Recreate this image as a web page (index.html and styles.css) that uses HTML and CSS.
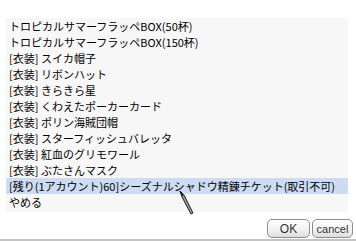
FILE: index.html
```html
<!DOCTYPE html>
<html lang="ja">
<head>
  <meta charset="UTF-8">
  <title>メニュー</title>
  <link rel="stylesheet" href="styles.css">
</head>
<body>

  <div class="window">
    <ul class="menu">
      <li>トロピカルサマーフラッペBOX(50杯)</li>
      <li>トロピカルサマーフラッペBOX(150杯)</li>
      <li>[衣装] スイカ帽子</li>
      <li>[衣装] リボンハット</li>
      <li>[衣装] きらきら星</li>
      <li>[衣装] くわえたポーカーカード</li>
      <li>[衣装] ポリン海賊団帽</li>
      <li>[衣装] スターフィッシュバレッタ</li>
      <li>[衣装] 紅血のグリモワール</li>
      <li>[衣装] ぶたさんマスク</li>
      <li class="selected">[残り(1アカウント)60]シーズナルシャドウ精錬チケット(取引不可)</li>
      <li>やめる</li>
    </ul>

    <div class="buttons">
      <button class="btn btn-ok">OK</button>
      <button class="btn btn-cancel">cancel</button>
    </div>

    <svg class="cursor" width="16" height="26" viewBox="0 0 16 26">
      <polygon points="1,1 5,5 14,23 12,24 3,7" fill="#9a9a9a" stroke="#222" stroke-width="1"/>
      <line x1="1" y1="1" x2="4" y2="6" stroke="#000" stroke-width="1"/>
    </svg>
  </div>

</body>
</html>
```

FILE: styles.css
```css
body {
  margin: 0;
  background: #fff;
  font-family: "Noto Sans CJK JP", "Liberation Sans", sans-serif;
  font-size: 11px;
  color: #000;
}

.window {
  position: relative;
  width: 356px;
  height: 241px;
  box-sizing: border-box;
  padding-top: 18px;
  border-bottom: 2px solid #c4c4c4;
}

.menu {
  list-style: none;
  margin: 0 0 0 6px;
  padding: 0 0 2px;
  width: 342px;
  background: #f7f7f7;
}

.menu li {
  height: 16px;
  line-height: 16px;
  padding-left: 3px;
  white-space: nowrap;
}

.menu li.selected {
  background: #cddcf3;
}

.buttons {
  display: flex;
  justify-content: flex-end;
  gap: 2px;
  padding-right: 3px;
  margin-top: 7px;
}

.btn {
  height: 19px;
  padding: 0;
  font-family: "Liberation Sans", sans-serif;
  font-size: 12px;
  color: #333;
  border: 1px solid #8e8e8e;
  border-radius: 5px;
  background: linear-gradient(#ffffff, #f2f2f2 60%, #dcdcdc);
}

.btn-ok {
  width: 43px;
}

.btn-cancel {
  width: 41px;
  font-size: 11px;
}

.cursor {
  position: absolute;
  left: 179px;
  top: 190px;
}
```
